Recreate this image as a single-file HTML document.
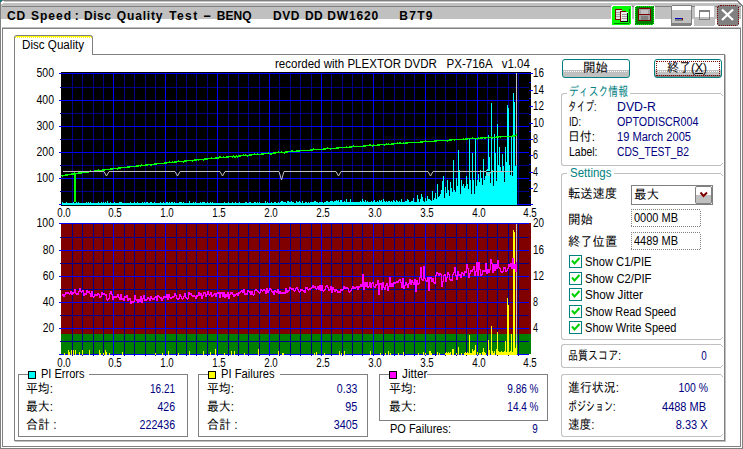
<!DOCTYPE html>
<html lang="ja"><head><meta charset="utf-8"><title>CD Speed : Disc Quality Test</title>
<style>
html,body{margin:0;padding:0;background:#fff;}
body{width:743px;height:449px;position:relative;overflow:hidden;font-family:"Liberation Sans","IPAGothic","Noto Sans CJK JP",sans-serif;font-size:12px;color:#000;}
div,span,svg{box-sizing:border-box;}
svg{position:absolute;left:0;top:0;}
</style></head><body>
<div style="position:absolute;left:0px;top:0px;width:743px;height:449px;background:#fff;"></div><div style="position:absolute;left:0px;top:0px;width:743px;height:1px;background:#808080;"></div><div style="position:absolute;left:0px;top:1px;width:743px;height:1px;background:#c0c0c0;"></div><div style="position:absolute;left:0px;top:2px;width:743px;height:1px;background:#fff;"></div><div style="position:absolute;left:0px;top:3px;width:743px;height:3px;background:#c0c0c0;"></div><div style="position:absolute;left:0px;top:6px;width:743px;height:1px;background:#808080;"></div><div style="position:absolute;left:0px;top:7px;width:743px;height:12px;background:#c0c0c0;"></div><div style="position:absolute;left:0px;top:19px;width:743px;height:8px;background:#fff;"></div><div style="position:absolute;left:0px;top:27px;width:743px;height:1px;background:#c0c0c0;"></div><div style="position:absolute;left:0px;top:0px;width:1px;height:449px;background:#808080;"></div><div style="position:absolute;left:1px;top:3px;width:1px;height:16px;background:#c0c0c0;"></div><div style="position:absolute;left:1px;top:19px;width:1px;height:429px;background:#fff;"></div><div style="position:absolute;left:742px;top:0px;width:1px;height:449px;background:#808080;"></div><div style="position:absolute;left:741px;top:6px;width:1px;height:443px;background:#fff;"></div><div style="position:absolute;left:0px;top:448px;width:743px;height:1px;background:#808080;"></div><div style="position:absolute;left:2px;top:28px;width:739px;height:1px;background:#808080;"></div><div style="position:absolute;left:2px;top:28px;width:1px;height:419px;background:#808080;"></div><div style="position:absolute;left:740px;top:28px;width:1px;height:419px;background:#808080;"></div><div style="position:absolute;left:2px;top:446px;width:739px;height:1px;background:#808080;"></div><svg width="743" height="449" shape-rendering="crispEdges"><path d="M0 0h2v1h-1v1h-1z" fill="#008080"/><path d="M2 0h1v1h-1zM1 1h1v1h-1zM0 2h1v1h-1z" fill="#808080"/><path d="M2 1h2v1h-2zM1 2h2v2h-2z" fill="#fff"/><path d="M738 0h5v5h-1v-1h-1v-1h-1v-1h-1v-1h-1z" fill="#fff"/><path d="M737 0h1v1h1v1h1v1h1v1h1v1h1v1h-2v-1h-1v-1h-1v-1h-1v-1h-1v-1h-1z" fill="#808080"/></svg><span style="position:absolute;top:8.842px;font-size:12px;line-height:14px;color:#000;white-space:pre;font-weight:bold;letter-spacing:0.856px;left:7px;transform-origin:0 0;">CD</span>
<span style="position:absolute;top:8.842px;font-size:12px;line-height:14px;color:#000;white-space:pre;font-weight:bold;letter-spacing:0.996px;left:31px;transform-origin:0 0;">Speed</span>
<span style="position:absolute;top:8.842px;font-size:12px;line-height:14px;color:#000;white-space:pre;font-weight:bold;letter-spacing:-0.7px;left:74.7px;transform-origin:0 0;">:</span>
<span style="position:absolute;top:8.842px;font-size:12px;line-height:14px;color:#000;white-space:pre;font-weight:bold;letter-spacing:0.547px;left:84px;transform-origin:0 0;">Disc</span>
<span style="position:absolute;top:8.842px;font-size:12px;line-height:14px;color:#000;white-space:pre;font-weight:bold;letter-spacing:0.835px;left:116.8px;transform-origin:0 0;">Quality</span>
<span style="position:absolute;top:8.842px;font-size:12px;line-height:14px;color:#000;white-space:pre;font-weight:bold;letter-spacing:1.401px;left:169.2px;transform-origin:0 0;">Test</span>
<span style="position:absolute;top:8.842px;font-size:12px;line-height:14px;color:#000;white-space:pre;font-weight:bold;left:202.7px;transform-origin:0 0;transform:scaleX(2.075);">-</span>
<span style="position:absolute;top:8.842px;font-size:12px;line-height:14px;color:#000;white-space:pre;font-weight:bold;letter-spacing:0.009px;left:216.8px;transform-origin:0 0;">BENQ</span>
<span style="position:absolute;top:8.842px;font-size:12px;line-height:14px;color:#000;white-space:pre;font-weight:bold;letter-spacing:0.478px;left:273px;transform-origin:0 0;">DVD</span>
<span style="position:absolute;top:8.842px;font-size:12px;line-height:14px;color:#000;white-space:pre;font-weight:bold;letter-spacing:0.456px;left:305px;transform-origin:0 0;">DD</span>
<span style="position:absolute;top:8.842px;font-size:12px;line-height:14px;color:#000;white-space:pre;font-weight:bold;letter-spacing:0.883px;left:327.2px;transform-origin:0 0;">DW1620</span>
<span style="position:absolute;top:8.842px;font-size:12px;line-height:14px;color:#000;white-space:pre;font-weight:bold;letter-spacing:1.319px;left:399.2px;transform-origin:0 0;">B7T9</span>
<div style="position:absolute;left:14px;top:54px;width:711px;height:1px;background:#808080;"></div><div style="position:absolute;left:14px;top:54px;width:1px;height:387px;background:#808080;"></div><div style="position:absolute;left:724px;top:54px;width:1px;height:387px;background:#808080;"></div><div style="position:absolute;left:14px;top:440px;width:711px;height:1px;background:#808080;"></div><div style="position:absolute;left:725px;top:55px;width:1px;height:387px;background:#c0c0c0;"></div><div style="position:absolute;left:15px;top:441px;width:711px;height:1px;background:#c0c0c0;"></div><div style="position:absolute;left:14px;top:35px;width:79px;height:20px;background:#fff;border:1px solid #808080;border-bottom:none;border-radius:3px 3px 0 0;"></div><div style="position:absolute;left:16px;top:36px;width:75px;height:1px;background:#ffff00;"></div><div style="position:absolute;left:15px;top:37px;width:77px;height:1px;background:repeating-linear-gradient(90deg,#ffff00 0,#ffff00 1px,#fff 1px,#fff 2px);"></div><span style="position:absolute;top:37.842px;font-size:12px;line-height:14px;color:#000;white-space:pre;left:22px;transform-origin:0 0;transform:scaleX(0.969);">Disc Quality</span>
<span style="position:absolute;top:56.842px;font-size:12px;line-height:14px;color:#000;white-space:pre;left:275px;transform-origin:0 0;transform:scaleX(0.961);">recorded with PLEXTOR DVDR   PX-716A   v1.04</span>
<svg width="743" height="449" viewBox="0 0 743 449" shape-rendering="crispEdges"><rect x="61" y="72" width="470" height="134" fill="#000"/><rect x="72" y="73" width="1" height="132" fill="#000088"/><rect x="82" y="73" width="1" height="132" fill="#000088"/><rect x="93" y="73" width="1" height="132" fill="#000088"/><rect x="103" y="73" width="1" height="132" fill="#000088"/><rect x="124" y="73" width="1" height="132" fill="#000088"/><rect x="134" y="73" width="1" height="132" fill="#000088"/><rect x="145" y="73" width="1" height="132" fill="#000088"/><rect x="155" y="73" width="1" height="132" fill="#000088"/><rect x="176" y="73" width="1" height="132" fill="#000088"/><rect x="186" y="73" width="1" height="132" fill="#000088"/><rect x="196" y="73" width="1" height="132" fill="#000088"/><rect x="207" y="73" width="1" height="132" fill="#000088"/><rect x="228" y="73" width="1" height="132" fill="#000088"/><rect x="238" y="73" width="1" height="132" fill="#000088"/><rect x="248" y="73" width="1" height="132" fill="#000088"/><rect x="259" y="73" width="1" height="132" fill="#000088"/><rect x="279" y="73" width="1" height="132" fill="#000088"/><rect x="290" y="73" width="1" height="132" fill="#000088"/><rect x="300" y="73" width="1" height="132" fill="#000088"/><rect x="311" y="73" width="1" height="132" fill="#000088"/><rect x="331" y="73" width="1" height="132" fill="#000088"/><rect x="342" y="73" width="1" height="132" fill="#000088"/><rect x="352" y="73" width="1" height="132" fill="#000088"/><rect x="362" y="73" width="1" height="132" fill="#000088"/><rect x="383" y="73" width="1" height="132" fill="#000088"/><rect x="394" y="73" width="1" height="132" fill="#000088"/><rect x="404" y="73" width="1" height="132" fill="#000088"/><rect x="414" y="73" width="1" height="132" fill="#000088"/><rect x="435" y="73" width="1" height="132" fill="#000088"/><rect x="445" y="73" width="1" height="132" fill="#000088"/><rect x="456" y="73" width="1" height="132" fill="#000088"/><rect x="466" y="73" width="1" height="132" fill="#000088"/><rect x="487" y="73" width="1" height="132" fill="#000088"/><rect x="497" y="73" width="1" height="132" fill="#000088"/><rect x="508" y="73" width="1" height="132" fill="#000088"/><rect x="518" y="73" width="1" height="132" fill="#000088"/><rect x="60" y="87" width="469" height="1" fill="#000088"/><rect x="60" y="113" width="469" height="1" fill="#000088"/><rect x="60" y="139" width="469" height="1" fill="#000088"/><rect x="60" y="165" width="469" height="1" fill="#000088"/><rect x="60" y="191" width="469" height="1" fill="#000088"/><rect x="113" y="73" width="1" height="132" fill="#0000ff"/><rect x="165" y="73" width="1" height="132" fill="#0000ff"/><rect x="217" y="73" width="1" height="132" fill="#0000ff"/><rect x="269" y="73" width="1" height="132" fill="#0000ff"/><rect x="321" y="73" width="1" height="132" fill="#0000ff"/><rect x="373" y="73" width="1" height="132" fill="#0000ff"/><rect x="425" y="73" width="1" height="132" fill="#0000ff"/><rect x="477" y="73" width="1" height="132" fill="#0000ff"/><rect x="59" y="73" width="470" height="1" fill="#0000ff"/><rect x="59" y="100" width="470" height="1" fill="#0000ff"/><rect x="59" y="126" width="470" height="1" fill="#0000ff"/><rect x="59" y="152" width="470" height="1" fill="#0000ff"/><rect x="59" y="178" width="470" height="1" fill="#0000ff"/><rect x="59" y="204" width="470" height="1" fill="#0000ff"/><rect x="529" y="204" width="4" height="1" fill="#0000ff"/><rect x="529" y="196" width="2" height="1" fill="#0000ff"/><rect x="529" y="188" width="4" height="1" fill="#0000ff"/><rect x="529" y="180" width="2" height="1" fill="#0000ff"/><rect x="529" y="172" width="4" height="1" fill="#0000ff"/><rect x="529" y="164" width="2" height="1" fill="#0000ff"/><rect x="529" y="155" width="4" height="1" fill="#0000ff"/><rect x="529" y="147" width="2" height="1" fill="#0000ff"/><rect x="529" y="139" width="4" height="1" fill="#0000ff"/><rect x="529" y="131" width="2" height="1" fill="#0000ff"/><rect x="529" y="123" width="4" height="1" fill="#0000ff"/><rect x="529" y="114" width="2" height="1" fill="#0000ff"/><rect x="529" y="106" width="4" height="1" fill="#0000ff"/><rect x="529" y="98" width="2" height="1" fill="#0000ff"/><rect x="529" y="90" width="4" height="1" fill="#0000ff"/><rect x="529" y="82" width="2" height="1" fill="#0000ff"/><rect x="529" y="73" width="4" height="1" fill="#0000ff"/><rect x="61" y="223" width="470" height="111" fill="#800000"/><rect x="61" y="334" width="470" height="20" fill="#008000"/><rect x="72" y="223" width="1" height="133" fill="#000088"/><rect x="82" y="223" width="1" height="133" fill="#000088"/><rect x="93" y="223" width="1" height="133" fill="#000088"/><rect x="103" y="223" width="1" height="133" fill="#000088"/><rect x="124" y="223" width="1" height="133" fill="#000088"/><rect x="134" y="223" width="1" height="133" fill="#000088"/><rect x="145" y="223" width="1" height="133" fill="#000088"/><rect x="155" y="223" width="1" height="133" fill="#000088"/><rect x="176" y="223" width="1" height="133" fill="#000088"/><rect x="186" y="223" width="1" height="133" fill="#000088"/><rect x="196" y="223" width="1" height="133" fill="#000088"/><rect x="207" y="223" width="1" height="133" fill="#000088"/><rect x="228" y="223" width="1" height="133" fill="#000088"/><rect x="238" y="223" width="1" height="133" fill="#000088"/><rect x="248" y="223" width="1" height="133" fill="#000088"/><rect x="259" y="223" width="1" height="133" fill="#000088"/><rect x="279" y="223" width="1" height="133" fill="#000088"/><rect x="290" y="223" width="1" height="133" fill="#000088"/><rect x="300" y="223" width="1" height="133" fill="#000088"/><rect x="311" y="223" width="1" height="133" fill="#000088"/><rect x="331" y="223" width="1" height="133" fill="#000088"/><rect x="342" y="223" width="1" height="133" fill="#000088"/><rect x="352" y="223" width="1" height="133" fill="#000088"/><rect x="362" y="223" width="1" height="133" fill="#000088"/><rect x="383" y="223" width="1" height="133" fill="#000088"/><rect x="394" y="223" width="1" height="133" fill="#000088"/><rect x="404" y="223" width="1" height="133" fill="#000088"/><rect x="414" y="223" width="1" height="133" fill="#000088"/><rect x="435" y="223" width="1" height="133" fill="#000088"/><rect x="445" y="223" width="1" height="133" fill="#000088"/><rect x="456" y="223" width="1" height="133" fill="#000088"/><rect x="466" y="223" width="1" height="133" fill="#000088"/><rect x="487" y="223" width="1" height="133" fill="#000088"/><rect x="497" y="223" width="1" height="133" fill="#000088"/><rect x="508" y="223" width="1" height="133" fill="#000088"/><rect x="518" y="223" width="1" height="133" fill="#000088"/><rect x="60" y="237" width="469" height="1" fill="#000088"/><rect x="60" y="263" width="469" height="1" fill="#000088"/><rect x="60" y="289" width="469" height="1" fill="#000088"/><rect x="60" y="315" width="469" height="1" fill="#000088"/><rect x="60" y="341" width="469" height="1" fill="#000088"/><rect x="113" y="223" width="1" height="133" fill="#0000ff"/><rect x="165" y="223" width="1" height="133" fill="#0000ff"/><rect x="217" y="223" width="1" height="133" fill="#0000ff"/><rect x="269" y="223" width="1" height="133" fill="#0000ff"/><rect x="321" y="223" width="1" height="133" fill="#0000ff"/><rect x="373" y="223" width="1" height="133" fill="#0000ff"/><rect x="425" y="223" width="1" height="133" fill="#0000ff"/><rect x="477" y="223" width="1" height="133" fill="#0000ff"/><rect x="59" y="223" width="470" height="1" fill="#0000ff"/><rect x="59" y="250" width="470" height="1" fill="#0000ff"/><rect x="59" y="276" width="470" height="1" fill="#0000ff"/><rect x="59" y="302" width="470" height="1" fill="#0000ff"/><rect x="59" y="328" width="470" height="1" fill="#0000ff"/><rect x="59" y="354" width="470" height="1" fill="#0000ff"/><path d="M62.5 205V202M63.5 205V203M64.5 205V203M65.5 205V203M66.5 205V202M67.5 205V203M68.5 205V203M69.5 205V203M70.5 205V203M71.5 205V203M72.5 205V203M73.5 205V202M74.5 205V203M75.5 205V203M76.5 205V202M77.5 205V203M78.5 205V202M79.5 205V203M80.5 205V203M81.5 205V203M82.5 205V203M83.5 205V203M84.5 205V203M85.5 205V203M86.5 205V202M87.5 205V203M88.5 205V202M89.5 205V203M90.5 205V202M91.5 205V203M92.5 205V203M93.5 205V203M94.5 205V203M95.5 205V203M96.5 205V203M97.5 205V203M98.5 205V202M99.5 205V203M100.5 205V203M101.5 205V202M102.5 205V203M103.5 205V202M104.5 205V203M105.5 205V202M106.5 205V203M107.5 205V201M108.5 205V203M109.5 205V203M110.5 205V202M111.5 205V203M112.5 205V203M113.5 205V203M114.5 205V202M115.5 205V203M116.5 205V203M117.5 205V203M118.5 205V203M119.5 205V202M120.5 205V202M121.5 205V202M122.5 205V203M123.5 205V203M124.5 205V203M125.5 205V203M126.5 205V203M127.5 205V203M128.5 205V203M129.5 205V203M130.5 205V202M131.5 205V203M132.5 205V203M133.5 205V203M134.5 205V202M135.5 205V203M136.5 205V203M137.5 205V202M138.5 205V203M139.5 205V203M140.5 205V203M141.5 205V203M142.5 205V202M143.5 205V203M144.5 205V202M145.5 205V203M146.5 205V202M147.5 205V202M148.5 205V203M149.5 205V203M150.5 205V202M151.5 205V202M152.5 205V203M153.5 205V203M154.5 205V202M155.5 205V203M156.5 205V203M157.5 205V203M158.5 205V203M159.5 205V203M160.5 205V202M161.5 205V203M162.5 205V203M163.5 205V202M164.5 205V203M165.5 205V203M166.5 205V202M167.5 205V202M168.5 205V203M169.5 205V202M170.5 205V203M171.5 205V202M172.5 205V202M173.5 205V203M174.5 205V202M175.5 205V203M176.5 205V203M177.5 205V203M178.5 205V203M179.5 205V202M180.5 205V202M181.5 205V202M182.5 205V203M183.5 205V202M184.5 205V203M185.5 205V203M186.5 205V203M187.5 205V203M188.5 205V203M189.5 205V201M190.5 205V203M191.5 205V203M192.5 205V203M193.5 205V202M194.5 205V203M195.5 205V202M196.5 205V203M197.5 205V203M198.5 205V203M199.5 205V203M200.5 205V202M201.5 205V203M202.5 205V202M203.5 205V202M204.5 205V202M205.5 205V203M206.5 205V203M207.5 205V202M208.5 205V203M209.5 205V203M210.5 205V202M211.5 205V203M212.5 205V202M213.5 205V203M214.5 205V203M215.5 205V203M216.5 205V203M217.5 205V203M218.5 205V203M219.5 205V203M220.5 205V203M221.5 205V203M222.5 205V203M223.5 205V203M224.5 205V202M225.5 205V203M226.5 205V203M227.5 205V203M228.5 205V202M229.5 205V203M230.5 205V203M231.5 205V203M232.5 205V202M233.5 205V203M234.5 205V203M235.5 205V202M236.5 205V203M237.5 205V203M238.5 205V203M239.5 205V202M240.5 205V203M241.5 205V203M242.5 205V203M243.5 205V203M244.5 205V203M245.5 205V202M246.5 205V202M247.5 205V203M248.5 205V203M249.5 205V202M250.5 205V202M251.5 205V203M252.5 205V203M253.5 205V203M254.5 205V202M255.5 205V202M256.5 205V203M257.5 205V202M258.5 205V203M259.5 205V202M260.5 205V203M261.5 205V203M262.5 205V203M263.5 205V203M264.5 205V203M265.5 205V201M266.5 205V203M267.5 205V202M268.5 205V203M269.5 205V203M270.5 205V203M271.5 205V202M272.5 205V203M273.5 205V203M274.5 205V202M275.5 205V202M276.5 205V203M277.5 205V203M278.5 205V202M279.5 205V203M280.5 205V202M281.5 205V201M282.5 205V201M283.5 205V202M284.5 205V202M285.5 205V202M286.5 205V203M287.5 205V201M288.5 205V201M289.5 205V202M290.5 205V202M291.5 205V201M292.5 205V202M293.5 205V202M294.5 205V203M295.5 205V203M296.5 205V201M297.5 205V202M298.5 205V202M299.5 205V201M300.5 205V202M301.5 205V203M302.5 205V201M303.5 205V203M304.5 205V203M305.5 205V202M306.5 205V202M307.5 205V203M308.5 205V202M309.5 205V203M310.5 205V202M311.5 205V202M312.5 205V202M313.5 205V202M314.5 205V201M315.5 205V201M316.5 205V202M317.5 205V202M318.5 205V203M319.5 205V202M320.5 205V202M321.5 205V202M322.5 205V202M323.5 205V203M324.5 205V202M325.5 205V202M326.5 205V201M327.5 205V201M328.5 205V202M329.5 205V202M330.5 205V201M331.5 205V201M332.5 205V201M333.5 205V202M334.5 205V201M335.5 205V201M336.5 205V200M337.5 205V201M338.5 205V200M339.5 205V202M340.5 205V200M341.5 205V200M342.5 205V202M343.5 205V202M344.5 205V201M345.5 205V202M346.5 205V199M347.5 205V202M348.5 205V202M349.5 205V202M350.5 205V199M351.5 205V202M352.5 205V202M353.5 205V202M354.5 205V202M355.5 205V202M356.5 205V202M357.5 205V202M358.5 205V202M359.5 205V202M360.5 205V201M361.5 205V202M362.5 205V199M363.5 205V201M364.5 205V202M365.5 205V200M366.5 205V202M367.5 205V201M368.5 205V202M369.5 205V202M370.5 205V202M371.5 205V201M372.5 205V202M373.5 205V201M374.5 205V200M375.5 205V202M376.5 205V202M377.5 205V201M378.5 205V202M379.5 205V200M380.5 205V201M381.5 205V200M382.5 205V202M383.5 205V199M384.5 205V201M385.5 205V202M386.5 205V201M387.5 205V202M388.5 205V201M389.5 205V201M390.5 205V202M391.5 205V201M392.5 205V202M393.5 205V200M394.5 205V201M395.5 205V202M396.5 205V200M397.5 205V201M398.5 205V202M399.5 205V201M400.5 205V202M401.5 205V199M402.5 205V202M403.5 205V202M404.5 205V202M405.5 205V201M406.5 205V201M407.5 205V199M408.5 205V200M409.5 205V202M410.5 205V202M411.5 205V201M412.5 205V201M413.5 205V198M414.5 205V202M415.5 205V202M416.5 205V202M417.5 205V195M418.5 205V199M419.5 205V202M420.5 205V199M421.5 205V194M422.5 205V197M423.5 205V201M424.5 205V202M425.5 205V198M426.5 205V201M427.5 205V196M428.5 205V199M429.5 205V199M430.5 205V200M431.5 205V201M432.5 205V191M433.5 205V200M434.5 205V198M435.5 205V193M436.5 205V199M437.5 205V184M438.5 205V197M439.5 205V196M440.5 205V194M441.5 205V190M442.5 205V181M443.5 205V176M444.5 205V198M445.5 205V187M446.5 205V193M447.5 205V180M448.5 205V190M449.5 205V196M450.5 205V182M451.5 205V188M452.5 205V192M453.5 205V160M454.5 205V190M455.5 205V192M456.5 205V178M457.5 205V186M458.5 205V150M459.5 205V170M460.5 205V194M461.5 205V180M462.5 205V186M463.5 205V184M464.5 205V188M465.5 205V186M466.5 205V176M467.5 205V184M468.5 205V189M469.5 205V138M470.5 205V180M471.5 205V194M472.5 205V153M473.5 205V180M474.5 205V194M475.5 205V138M476.5 205V186M477.5 205V180M478.5 205V174M479.5 205V182M480.5 205V170M481.5 205V178M482.5 205V185M483.5 205V159M484.5 205V180M485.5 205V176M486.5 205V170M487.5 205V169M488.5 205V135M489.5 205V157M490.5 205V183M491.5 205V103M492.5 205V170M493.5 205V186M494.5 205V134M495.5 205V153M496.5 205V181M497.5 205V124M498.5 205V165M499.5 205V147M500.5 205V167M501.5 205V172M502.5 205V154M503.5 205V166M504.5 205V182M505.5 205V147M506.5 205V162M507.5 205V105M508.5 205V108M509.5 205V165M510.5 205V175M511.5 205V136M512.5 205V176M513.5 205V93M514.5 205V102M515.5 205V166M516.5 205V150" stroke="#00ffff" stroke-width="1" fill="none"/><rect x="516" y="73" width="1" height="92" fill="#c0c0c0"/><rect x="74" y="173" width="2" height="29" fill="#00ff00"/><path d="M61 175h1v1h-1zM62 175h1v2h-1zM63 175h1v1h-1zM64 175h1v1h-1zM65 174h1v2h-1zM66 174h1v2h-1zM67 174h1v2h-1zM68 174h1v1h-1zM69 174h1v1h-1zM70 174h1v1h-1zM71 173h1v2h-1zM72 173h1v2h-1zM73 173h1v2h-1zM74 172h1v2h-1zM75 173h1v1h-1zM76 173h1v1h-1zM77 173h1v1h-1zM78 172h1v2h-1zM79 172h1v2h-1zM80 172h1v2h-1zM81 172h1v2h-1zM82 172h1v1h-1zM83 172h1v1h-1zM84 171h1v2h-1zM85 172h1v1h-1zM86 171h1v2h-1zM87 171h1v2h-1zM88 171h1v2h-1zM89 171h1v1h-1zM90 170h1v2h-1zM91 171h1v1h-1zM92 171h1v1h-1zM93 171h1v1h-1zM94 170h1v2h-1zM95 170h1v2h-1zM96 170h1v2h-1zM97 170h1v1h-1zM98 169h1v2h-1zM99 170h1v1h-1zM100 170h1v1h-1zM101 170h1v1h-1zM102 169h1v2h-1zM103 169h1v2h-1zM104 169h1v2h-1zM105 169h1v1h-1zM106 169h1v1h-1zM107 169h1v1h-1zM108 169h1v1h-1zM109 169h1v1h-1zM110 168h1v2h-1zM111 168h1v2h-1zM112 168h1v2h-1zM113 168h1v1h-1zM114 168h1v1h-1zM115 168h1v1h-1zM116 168h1v1h-1zM117 168h1v2h-1zM118 167h1v2h-1zM119 167h1v2h-1zM120 167h1v2h-1zM121 167h1v1h-1zM122 167h1v1h-1zM123 167h1v1h-1zM124 167h1v1h-1zM125 167h1v1h-1zM126 167h1v1h-1zM127 166h1v2h-1zM128 166h1v2h-1zM129 166h1v2h-1zM130 166h1v1h-1zM131 166h1v1h-1zM132 166h1v1h-1zM133 166h1v1h-1zM134 166h1v1h-1zM135 166h1v1h-1zM136 165h1v2h-1zM137 165h1v2h-1zM138 165h1v2h-1zM139 165h1v1h-1zM140 165h1v2h-1zM141 164h1v2h-1zM142 165h1v1h-1zM143 165h1v1h-1zM144 165h1v1h-1zM145 164h1v2h-1zM146 164h1v2h-1zM147 164h1v2h-1zM148 164h1v1h-1zM149 164h1v1h-1zM150 164h1v2h-1zM151 164h1v2h-1zM152 164h1v1h-1zM153 164h1v1h-1zM154 163h1v2h-1zM155 163h1v2h-1zM156 163h1v2h-1zM157 163h1v1h-1zM158 163h1v1h-1zM159 163h1v1h-1zM160 163h1v1h-1zM161 163h1v1h-1zM162 163h1v1h-1zM163 163h1v1h-1zM164 162h1v2h-1zM165 162h1v2h-1zM166 162h1v2h-1zM167 162h1v1h-1zM168 162h1v1h-1zM169 161h1v2h-1zM170 162h1v1h-1zM171 162h1v1h-1zM172 161h1v2h-1zM173 162h1v1h-1zM174 161h1v2h-1zM175 161h1v2h-1zM176 161h1v2h-1zM177 161h1v1h-1zM178 160h1v2h-1zM179 161h1v1h-1zM180 161h1v1h-1zM181 161h1v1h-1zM182 161h1v1h-1zM183 161h1v2h-1zM184 160h1v2h-1zM185 160h1v2h-1zM186 160h1v2h-1zM187 160h1v1h-1zM188 160h1v1h-1zM189 160h1v1h-1zM190 160h1v1h-1zM191 160h1v1h-1zM192 160h1v2h-1zM193 160h1v1h-1zM194 159h1v2h-1zM195 159h1v2h-1zM196 159h1v2h-1zM197 159h1v1h-1zM198 159h1v2h-1zM199 159h1v1h-1zM200 159h1v1h-1zM201 159h1v1h-1zM202 159h1v1h-1zM203 159h1v2h-1zM204 158h1v2h-1zM205 158h1v2h-1zM206 158h1v2h-1zM207 158h1v2h-1zM208 158h1v1h-1zM209 158h1v1h-1zM210 158h1v1h-1zM211 157h1v2h-1zM212 158h1v1h-1zM213 158h1v1h-1zM214 158h1v1h-1zM215 157h1v2h-1zM216 157h1v2h-1zM217 157h1v2h-1zM218 157h1v2h-1zM219 156h1v2h-1zM220 156h1v2h-1zM221 157h1v1h-1zM222 157h1v1h-1zM223 156h1v2h-1zM224 157h1v1h-1zM225 157h1v1h-1zM226 156h1v2h-1zM227 156h1v2h-1zM228 156h1v2h-1zM229 156h1v1h-1zM230 156h1v1h-1zM231 156h1v1h-1zM232 156h1v2h-1zM233 155h1v2h-1zM234 156h1v2h-1zM235 156h1v2h-1zM236 155h1v2h-1zM237 156h1v2h-1zM238 155h1v2h-1zM239 155h1v2h-1zM240 155h1v2h-1zM241 155h1v1h-1zM242 155h1v1h-1zM243 154h1v2h-1zM244 155h1v1h-1zM245 154h1v2h-1zM246 155h1v1h-1zM247 155h1v2h-1zM248 155h1v1h-1zM249 154h1v2h-1zM250 154h1v2h-1zM251 154h1v2h-1zM252 154h1v1h-1zM253 154h1v1h-1zM254 153h1v2h-1zM255 154h1v1h-1zM256 154h1v1h-1zM257 153h1v2h-1zM258 154h1v1h-1zM259 154h1v1h-1zM260 154h1v1h-1zM261 153h1v2h-1zM262 153h1v2h-1zM263 153h1v2h-1zM264 153h1v1h-1zM265 153h1v1h-1zM266 153h1v1h-1zM267 153h1v1h-1zM268 152h1v2h-1zM269 153h1v1h-1zM270 153h1v2h-1zM271 153h1v2h-1zM272 153h1v1h-1zM273 152h1v2h-1zM274 152h1v2h-1zM275 152h1v2h-1zM276 152h1v1h-1zM277 152h1v1h-1zM278 151h1v2h-1zM279 152h1v1h-1zM280 152h1v1h-1zM281 151h1v2h-1zM282 152h1v1h-1zM283 152h1v1h-1zM284 152h1v2h-1zM285 151h1v2h-1zM286 151h1v2h-1zM287 151h1v2h-1zM288 151h1v1h-1zM289 151h1v1h-1zM290 151h1v1h-1zM291 150h1v2h-1zM292 150h1v2h-1zM293 151h1v1h-1zM294 151h1v1h-1zM295 151h1v1h-1zM296 150h1v2h-1zM297 150h1v2h-1zM298 150h1v2h-1zM299 150h1v2h-1zM300 150h1v1h-1zM301 150h1v1h-1zM302 150h1v1h-1zM303 150h1v1h-1zM304 150h1v1h-1zM305 150h1v1h-1zM306 150h1v1h-1zM307 150h1v1h-1zM308 150h1v1h-1zM309 150h1v1h-1zM310 149h1v2h-1zM311 149h1v2h-1zM312 149h1v2h-1zM313 148h1v2h-1zM314 149h1v1h-1zM315 149h1v1h-1zM316 149h1v1h-1zM317 149h1v1h-1zM318 149h1v1h-1zM319 149h1v1h-1zM320 149h1v1h-1zM321 149h1v1h-1zM322 149h1v1h-1zM323 148h1v2h-1zM324 148h1v2h-1zM325 148h1v2h-1zM326 148h1v1h-1zM327 147h1v2h-1zM328 148h1v1h-1zM329 148h1v1h-1zM330 148h1v2h-1zM331 148h1v1h-1zM332 148h1v1h-1zM333 148h1v1h-1zM334 148h1v1h-1zM335 148h1v1h-1zM336 147h1v2h-1zM337 147h1v2h-1zM338 147h1v2h-1zM339 147h1v1h-1zM340 147h1v1h-1zM341 147h1v1h-1zM342 147h1v1h-1zM343 147h1v1h-1zM344 147h1v1h-1zM345 147h1v1h-1zM346 146h1v2h-1zM347 147h1v1h-1zM348 147h1v1h-1zM349 146h1v2h-1zM350 146h1v2h-1zM351 146h1v2h-1zM352 146h1v1h-1zM353 145h1v2h-1zM354 146h1v1h-1zM355 146h1v1h-1zM356 146h1v1h-1zM357 146h1v1h-1zM358 146h1v1h-1zM359 146h1v1h-1zM360 146h1v1h-1zM361 146h1v1h-1zM362 146h1v1h-1zM363 145h1v2h-1zM364 145h1v2h-1zM365 145h1v2h-1zM366 145h1v1h-1zM367 145h1v1h-1zM368 145h1v1h-1zM369 144h1v2h-1zM370 144h1v2h-1zM371 145h1v1h-1zM372 145h1v2h-1zM373 144h1v2h-1zM374 145h1v1h-1zM375 145h1v1h-1zM376 145h1v1h-1zM377 144h1v2h-1zM378 144h1v2h-1zM379 144h1v2h-1zM380 144h1v1h-1zM381 144h1v1h-1zM382 144h1v1h-1zM383 144h1v1h-1zM384 144h1v2h-1zM385 144h1v1h-1zM386 143h1v2h-1zM387 144h1v1h-1zM388 143h1v2h-1zM389 144h1v1h-1zM390 144h1v1h-1zM391 143h1v2h-1zM392 143h1v2h-1zM393 143h1v2h-1zM394 143h1v1h-1zM395 143h1v1h-1zM396 143h1v1h-1zM397 142h1v2h-1zM398 143h1v1h-1zM399 142h1v2h-1zM400 142h1v2h-1zM401 143h1v1h-1zM402 143h1v1h-1zM403 142h1v2h-1zM404 143h1v1h-1zM405 142h1v2h-1zM406 142h1v2h-1zM407 142h1v2h-1zM408 142h1v1h-1zM409 142h1v1h-1zM410 142h1v1h-1zM411 142h1v1h-1zM412 142h1v1h-1zM413 142h1v1h-1zM414 142h1v1h-1zM415 142h1v1h-1zM416 142h1v1h-1zM417 142h1v1h-1zM418 142h1v1h-1zM419 142h1v1h-1zM420 141h1v2h-1zM421 141h1v2h-1zM422 141h1v2h-1zM423 141h1v1h-1zM424 141h1v1h-1zM425 140h1v2h-1zM426 141h1v1h-1zM427 141h1v1h-1zM428 141h1v1h-1zM429 141h1v1h-1zM430 141h1v1h-1zM431 141h1v1h-1zM432 141h1v1h-1zM433 141h1v1h-1zM434 140h1v2h-1zM435 140h1v2h-1zM436 140h1v2h-1zM437 140h1v1h-1zM438 140h1v1h-1zM439 140h1v1h-1zM440 140h1v1h-1zM441 140h1v1h-1zM442 140h1v1h-1zM443 140h1v1h-1zM444 140h1v1h-1zM445 140h1v1h-1zM446 140h1v1h-1zM447 140h1v2h-1zM448 140h1v1h-1zM449 139h1v2h-1zM450 139h1v2h-1zM451 139h1v2h-1zM452 139h1v1h-1zM453 139h1v1h-1zM454 139h1v2h-1zM455 139h1v1h-1zM456 139h1v1h-1zM457 139h1v1h-1zM458 139h1v1h-1zM459 139h1v1h-1zM460 139h1v1h-1zM461 139h1v1h-1zM462 139h1v1h-1zM463 138h1v2h-1zM464 139h1v1h-1zM465 138h1v2h-1zM466 138h1v2h-1zM467 138h1v2h-1zM468 138h1v1h-1zM469 138h1v1h-1zM470 138h1v1h-1zM471 138h1v1h-1zM472 137h1v2h-1zM473 138h1v1h-1zM474 138h1v1h-1zM475 138h1v1h-1zM476 138h1v1h-1zM477 138h1v2h-1zM478 137h1v2h-1zM479 138h1v1h-1zM480 137h1v2h-1zM481 137h1v2h-1zM482 137h1v2h-1zM483 137h1v1h-1zM484 137h1v2h-1zM485 137h1v2h-1zM486 137h1v1h-1zM487 137h1v1h-1zM488 137h1v2h-1zM489 137h1v1h-1zM490 137h1v1h-1zM491 136h1v2h-1zM492 137h1v2h-1zM493 137h1v1h-1zM494 137h1v1h-1zM495 137h1v1h-1zM496 136h1v2h-1zM497 136h1v2h-1zM498 136h1v2h-1zM499 136h1v1h-1zM500 136h1v2h-1zM501 136h1v1h-1zM502 136h1v1h-1zM503 136h1v1h-1zM504 136h1v1h-1zM505 136h1v1h-1zM506 136h1v1h-1zM507 136h1v1h-1zM508 136h1v1h-1zM509 136h1v1h-1zM510 136h1v1h-1zM511 136h1v1h-1zM512 135h1v2h-1zM513 135h1v2h-1zM514 135h1v2h-1zM515 135h1v1h-1zM516 134h1v2h-1z" fill="#00ff00"/><rect x="63" y="171" width="450" height="1" fill="#c0c0c0"/><rect x="104" y="171" width="5" height="1" fill="#000"/><path d="M104 171.5L106.5 176L109 171.5" stroke="#c0c0c0" stroke-width="1" fill="none" shape-rendering="auto"/><rect x="175" y="171" width="5" height="1" fill="#000"/><path d="M175 171.5L177.5 176L180 171.5" stroke="#c0c0c0" stroke-width="1" fill="none" shape-rendering="auto"/><rect x="220" y="171" width="5" height="1" fill="#000"/><path d="M220 171.5L222.5 176L225 171.5" stroke="#c0c0c0" stroke-width="1" fill="none" shape-rendering="auto"/><rect x="279" y="171" width="5" height="1" fill="#000"/><path d="M279 171.5L281.5 180L284 171.5" stroke="#c0c0c0" stroke-width="1" fill="none" shape-rendering="auto"/><rect x="336" y="171" width="5" height="1" fill="#000"/><path d="M336 171.5L338.5 176L341 171.5" stroke="#c0c0c0" stroke-width="1" fill="none" shape-rendering="auto"/><rect x="428" y="171" width="5" height="1" fill="#000"/><path d="M428 171.5L430.5 176L433 171.5" stroke="#c0c0c0" stroke-width="1" fill="none" shape-rendering="auto"/><rect x="486" y="171" width="5" height="1" fill="#000"/><path d="M486 171.5L488.5 176L491 171.5" stroke="#c0c0c0" stroke-width="1" fill="none" shape-rendering="auto"/><rect x="516" y="224" width="1" height="130" fill="#c0c0c0"/><path d="M64.5 355V353M68.5 355V350M69.5 355V352M71.5 355V350M73.5 355V350M75.5 355V350M79.5 355V352M82.5 355V350M89.5 355V350M99.5 355V350M100.5 355V353M103.5 355V353M105.5 355V350M106.5 355V352M109.5 355V353M122.5 355V352M155.5 355V353M162.5 355V353M168.5 355V351M178.5 355V353M189.5 355V351M203.5 355V351M210.5 355V352M215.5 355V349M224.5 355V353M231.5 355V351M234.5 355V351M244.5 355V353M258.5 355V349M278.5 355V351M282.5 355V353M283.5 355V353M314.5 355V353M316.5 355V352M324.5 355V353M339.5 355V351M341.5 355V353M344.5 355V351M370.5 355V351M380.5 355V353M385.5 355V353M388.5 355V351M390.5 355V353M398.5 355V353M403.5 355V352M418.5 355V353M423.5 355V352M425.5 355V353M429.5 355V351M430.5 355V351M431.5 355V353M437.5 355V352M439.5 355V353M445.5 355V353M446.5 355V352M447.5 355V353M448.5 355V352M449.5 355V353M450.5 355V352M452.5 355V349M453.5 355V349M456.5 355V353M458.5 355V347M461.5 355V353M464.5 355V353M465.5 355V352M466.5 355V353M467.5 355V352M468.5 355V353M469.5 355V335M470.5 355V353M471.5 355V353M472.5 355V349M473.5 355V351M474.5 355V350M475.5 355V345M477.5 355V352M479.5 355V353M480.5 355V353M482.5 355V352M483.5 355V348M484.5 355V352M485.5 355V353M488.5 355V340M489.5 355V350M491.5 355V326M492.5 355V351M493.5 355V353M494.5 355V351M496.5 355V349M497.5 355V332M498.5 355V351M499.5 355V352M500.5 355V352M501.5 355V351M502.5 355V352M503.5 355V352M504.5 355V351M505.5 355V341M506.5 355V352M507.5 355V298M508.5 355V305M509.5 355V352M510.5 355V351M511.5 355V334M512.5 355V352M513.5 355V230M514.5 355V232M515.5 355V348M516.5 355V345" stroke="#ffff00" stroke-width="1" fill="none"/><path d="M62 294h1v2h-1zM63 294h1v3h-1zM64 294h1v3h-1zM65 292h1v3h-1zM66 292h1v2h-1zM67 292h1v2h-1zM68 292h1v2h-1zM69 293h1v2h-1zM70 291h1v3h-1zM71 291h1v4h-1zM72 292h1v3h-1zM73 292h1v2h-1zM74 289h1v4h-1zM75 289h1v5h-1zM76 293h1v2h-1zM77 293h1v2h-1zM78 291h1v4h-1zM79 288h1v4h-1zM80 288h1v4h-1zM81 291h1v2h-1zM82 290h1v2h-1zM83 290h1v6h-1zM84 293h1v3h-1zM85 293h1v2h-1zM86 290h1v5h-1zM87 290h1v3h-1zM88 291h1v2h-1zM89 291h1v3h-1zM90 293h1v4h-1zM91 291h1v6h-1zM92 291h1v6h-1zM93 296h1v2h-1zM94 294h1v3h-1zM95 294h1v2h-1zM96 294h1v2h-1zM97 293h1v3h-1zM98 293h1v2h-1zM99 294h1v4h-1zM100 296h1v2h-1zM101 292h1v5h-1zM102 292h1v3h-1zM103 293h1v2h-1zM104 293h1v2h-1zM105 294h1v2h-1zM106 294h1v6h-1zM107 299h1v2h-1zM108 298h1v2h-1zM109 293h1v6h-1zM110 291h1v3h-1zM111 291h1v4h-1zM112 294h1v6h-1zM113 296h1v4h-1zM114 296h1v2h-1zM115 296h1v2h-1zM116 296h1v2h-1zM117 294h1v3h-1zM118 294h1v4h-1zM119 297h1v3h-1zM120 294h1v6h-1zM121 294h1v6h-1zM122 298h1v2h-1zM123 298h1v3h-1zM124 296h1v5h-1zM125 296h1v2h-1zM126 295h1v3h-1zM127 295h1v6h-1zM128 298h1v3h-1zM129 298h1v2h-1zM130 298h1v6h-1zM131 301h1v3h-1zM132 301h1v2h-1zM133 301h1v2h-1zM134 295h1v7h-1zM135 295h1v5h-1zM136 299h1v2h-1zM137 299h1v4h-1zM138 299h1v4h-1zM139 299h1v3h-1zM140 296h1v6h-1zM141 296h1v7h-1zM142 298h1v5h-1zM143 295h1v4h-1zM144 295h1v6h-1zM145 299h1v2h-1zM146 299h1v2h-1zM147 297h1v3h-1zM148 297h1v2h-1zM149 298h1v3h-1zM150 296h1v5h-1zM151 296h1v3h-1zM152 298h1v2h-1zM153 298h1v2h-1zM154 297h1v3h-1zM155 296h1v2h-1zM156 296h1v5h-1zM157 295h1v6h-1zM158 295h1v2h-1zM159 296h1v2h-1zM160 297h1v2h-1zM161 297h1v4h-1zM162 298h1v3h-1zM163 296h1v3h-1zM164 296h1v2h-1zM165 296h1v2h-1zM166 294h1v4h-1zM167 294h1v6h-1zM168 294h1v6h-1zM169 294h1v4h-1zM170 297h1v2h-1zM171 297h1v2h-1zM172 296h1v2h-1zM173 296h1v2h-1zM174 293h1v4h-1zM175 293h1v3h-1zM176 295h1v4h-1zM177 298h1v2h-1zM178 298h1v2h-1zM179 294h1v5h-1zM180 294h1v3h-1zM181 296h1v3h-1zM182 298h1v2h-1zM183 296h1v3h-1zM184 293h1v4h-1zM185 293h1v5h-1zM186 297h1v2h-1zM187 298h1v2h-1zM188 292h1v7h-1zM189 292h1v3h-1zM190 293h1v2h-1zM191 293h1v3h-1zM192 295h1v2h-1zM193 295h1v2h-1zM194 295h1v2h-1zM195 296h1v3h-1zM196 295h1v4h-1zM197 295h1v2h-1zM198 292h1v4h-1zM199 292h1v4h-1zM200 293h1v3h-1zM201 293h1v6h-1zM202 295h1v4h-1zM203 292h1v4h-1zM204 292h1v2h-1zM205 292h1v5h-1zM206 294h1v3h-1zM207 291h1v4h-1zM208 291h1v4h-1zM209 294h1v2h-1zM210 292h1v3h-1zM211 292h1v5h-1zM212 295h1v2h-1zM213 294h1v2h-1zM214 293h1v2h-1zM215 293h1v4h-1zM216 293h1v4h-1zM217 292h1v2h-1zM218 292h1v2h-1zM219 292h1v6h-1zM220 292h1v6h-1zM221 292h1v2h-1zM222 292h1v5h-1zM223 292h1v5h-1zM224 292h1v6h-1zM225 294h1v4h-1zM226 294h1v3h-1zM227 292h1v5h-1zM228 292h1v7h-1zM229 294h1v5h-1zM230 292h1v3h-1zM231 292h1v2h-1zM232 292h1v3h-1zM233 294h1v3h-1zM234 294h1v3h-1zM235 294h1v2h-1zM236 293h1v2h-1zM237 293h1v3h-1zM238 292h1v4h-1zM239 292h1v2h-1zM240 291h1v2h-1zM241 290h1v2h-1zM242 290h1v3h-1zM243 289h1v4h-1zM244 289h1v6h-1zM245 293h1v2h-1zM246 293h1v2h-1zM247 290h1v5h-1zM248 290h1v2h-1zM249 291h1v2h-1zM250 291h1v4h-1zM251 291h1v4h-1zM252 291h1v4h-1zM253 294h1v2h-1zM254 290h1v5h-1zM255 289h1v2h-1zM256 289h1v2h-1zM257 290h1v2h-1zM258 291h1v2h-1zM259 292h1v2h-1zM260 289h1v4h-1zM261 289h1v2h-1zM262 290h1v2h-1zM263 289h1v2h-1zM264 289h1v2h-1zM265 290h1v4h-1zM266 288h1v6h-1zM267 288h1v5h-1zM268 290h1v3h-1zM269 288h1v3h-1zM270 288h1v2h-1zM271 289h1v3h-1zM272 291h1v2h-1zM273 291h1v4h-1zM274 290h1v5h-1zM275 290h1v2h-1zM276 291h1v2h-1zM277 289h1v4h-1zM278 289h1v5h-1zM279 291h1v3h-1zM280 291h1v3h-1zM281 292h1v2h-1zM282 292h1v2h-1zM283 292h1v2h-1zM284 292h1v2h-1zM285 288h1v6h-1zM286 288h1v5h-1zM287 290h1v3h-1zM288 290h1v2h-1zM289 287h1v4h-1zM290 287h1v2h-1zM291 288h1v2h-1zM292 288h1v2h-1zM293 288h1v3h-1zM294 290h1v2h-1zM295 288h1v3h-1zM296 287h1v2h-1zM297 287h1v3h-1zM298 289h1v3h-1zM299 291h1v2h-1zM300 289h1v3h-1zM301 289h1v2h-1zM302 289h1v2h-1zM303 290h1v2h-1zM304 290h1v3h-1zM305 287h1v6h-1zM306 287h1v2h-1zM307 287h1v3h-1zM308 289h1v2h-1zM309 288h1v2h-1zM310 288h1v2h-1zM311 287h1v2h-1zM312 285h1v3h-1zM313 285h1v3h-1zM314 286h1v2h-1zM315 286h1v3h-1zM316 288h1v2h-1zM317 286h1v3h-1zM318 286h1v4h-1zM319 285h1v5h-1zM320 285h1v6h-1zM321 285h1v6h-1zM322 285h1v6h-1zM323 290h1v2h-1zM324 289h1v2h-1zM325 286h1v4h-1zM326 285h1v2h-1zM327 285h1v3h-1zM328 287h1v4h-1zM329 289h1v2h-1zM330 286h1v4h-1zM331 286h1v7h-1zM332 287h1v6h-1zM333 287h1v3h-1zM334 289h1v3h-1zM335 289h1v3h-1zM336 289h1v2h-1zM337 290h1v3h-1zM338 291h1v2h-1zM339 291h1v2h-1zM340 289h1v4h-1zM341 289h1v2h-1zM342 289h1v2h-1zM343 286h1v4h-1zM344 286h1v3h-1zM345 287h1v2h-1zM346 287h1v2h-1zM347 287h1v2h-1zM348 288h1v4h-1zM349 291h1v2h-1zM350 290h1v2h-1zM351 288h1v3h-1zM352 286h1v3h-1zM353 286h1v3h-1zM354 287h1v2h-1zM355 287h1v2h-1zM356 286h1v2h-1zM357 286h1v4h-1zM358 286h1v4h-1zM359 286h1v2h-1zM360 284h1v3h-1zM361 284h1v3h-1zM362 274h1v13h-1zM363 274h1v16h-1zM364 282h1v8h-1zM365 282h1v5h-1zM366 282h1v5h-1zM367 282h1v6h-1zM368 286h1v2h-1zM369 282h1v5h-1zM370 282h1v6h-1zM371 283h1v5h-1zM372 282h1v2h-1zM373 282h1v5h-1zM374 286h1v2h-1zM375 284h1v4h-1zM376 284h1v2h-1zM377 280h1v5h-1zM378 280h1v15h-1zM379 283h1v12h-1zM380 283h1v2h-1zM381 283h1v7h-1zM382 282h1v8h-1zM383 282h1v6h-1zM384 287h1v3h-1zM385 285h1v5h-1zM386 283h1v3h-1zM387 283h1v8h-1zM388 286h1v5h-1zM389 277h1v10h-1zM390 277h1v10h-1zM391 283h1v4h-1zM392 283h1v4h-1zM393 282h1v5h-1zM394 282h1v2h-1zM395 282h1v2h-1zM396 281h1v2h-1zM397 281h1v2h-1zM398 280h1v3h-1zM399 279h1v2h-1zM400 279h1v4h-1zM401 282h1v6h-1zM402 278h1v10h-1zM403 278h1v11h-1zM404 285h1v4h-1zM405 282h1v4h-1zM406 282h1v3h-1zM407 284h1v4h-1zM408 283h1v5h-1zM409 279h1v5h-1zM410 279h1v6h-1zM411 280h1v5h-1zM412 280h1v3h-1zM413 282h1v3h-1zM414 279h1v6h-1zM415 279h1v13h-1zM416 280h1v12h-1zM417 280h1v5h-1zM418 283h1v2h-1zM419 277h1v7h-1zM420 267h1v11h-1zM421 267h1v13h-1zM422 279h1v2h-1zM423 266h1v15h-1zM424 266h1v13h-1zM425 278h1v3h-1zM426 280h1v2h-1zM427 277h1v5h-1zM428 277h1v14h-1zM429 277h1v14h-1zM430 277h1v2h-1zM431 277h1v5h-1zM432 278h1v4h-1zM433 278h1v5h-1zM434 282h1v2h-1zM435 275h1v9h-1zM436 272h1v4h-1zM437 272h1v2h-1zM438 273h1v3h-1zM439 273h1v3h-1zM440 273h1v2h-1zM441 274h1v13h-1zM442 281h1v6h-1zM443 275h1v7h-1zM444 274h1v2h-1zM445 274h1v8h-1zM446 277h1v5h-1zM447 272h1v6h-1zM448 272h1v3h-1zM449 274h1v6h-1zM450 279h1v2h-1zM451 279h1v2h-1zM452 274h1v7h-1zM453 272h1v3h-1zM454 267h1v6h-1zM455 267h1v9h-1zM456 275h1v5h-1zM457 271h1v9h-1zM458 271h1v5h-1zM459 274h1v2h-1zM460 274h1v4h-1zM461 272h1v6h-1zM462 272h1v2h-1zM463 273h1v3h-1zM464 271h1v5h-1zM465 271h1v2h-1zM466 264h1v9h-1zM467 264h1v5h-1zM468 268h1v10h-1zM469 273h1v5h-1zM470 270h1v4h-1zM471 270h1v2h-1zM472 269h1v3h-1zM473 266h1v4h-1zM474 266h1v10h-1zM475 271h1v5h-1zM476 262h1v10h-1zM477 262h1v14h-1zM478 262h1v14h-1zM479 262h1v8h-1zM480 269h1v7h-1zM481 274h1v2h-1zM482 270h1v5h-1zM483 270h1v2h-1zM484 270h1v2h-1zM485 263h1v9h-1zM486 263h1v11h-1zM487 269h1v5h-1zM488 269h1v4h-1zM489 269h1v4h-1zM490 259h1v11h-1zM491 259h1v5h-1zM492 263h1v10h-1zM493 264h1v9h-1zM494 264h1v7h-1zM495 264h1v7h-1zM496 264h1v5h-1zM497 260h1v9h-1zM498 260h1v8h-1zM499 267h1v2h-1zM500 268h1v4h-1zM501 271h1v2h-1zM502 271h1v2h-1zM503 267h1v5h-1zM504 267h1v2h-1zM505 267h1v5h-1zM506 270h1v2h-1zM507 268h1v3h-1zM508 264h1v5h-1zM509 264h1v3h-1zM510 263h1v4h-1zM511 263h1v6h-1zM512 258h1v11h-1zM513 258h1v11h-1zM514 264h1v5h-1zM515 264h1v8h-1zM516 262h1v10h-1z" fill="#ff00ff"/></svg><span style="position:absolute;top:65.842px;font-size:12px;line-height:14px;color:#000;white-space:pre;right:689px;transform-origin:100% 0;transform:scaleX(0.874);">500</span>
<span style="position:absolute;top:92.842px;font-size:12px;line-height:14px;color:#000;white-space:pre;right:689px;transform-origin:100% 0;transform:scaleX(0.874);">400</span>
<span style="position:absolute;top:118.842px;font-size:12px;line-height:14px;color:#000;white-space:pre;right:689px;transform-origin:100% 0;transform:scaleX(0.874);">300</span>
<span style="position:absolute;top:144.842px;font-size:12px;line-height:14px;color:#000;white-space:pre;right:689px;transform-origin:100% 0;transform:scaleX(0.874);">200</span>
<span style="position:absolute;top:170.842px;font-size:12px;line-height:14px;color:#000;white-space:pre;right:689px;transform-origin:100% 0;transform:scaleX(0.874);">100</span>
<span style="position:absolute;top:215.842px;font-size:12px;line-height:14px;color:#000;white-space:pre;right:689px;transform-origin:100% 0;transform:scaleX(0.874);">100</span>
<span style="position:absolute;top:242.842px;font-size:12px;line-height:14px;color:#000;white-space:pre;right:689px;transform-origin:100% 0;transform:scaleX(0.861);">80</span>
<span style="position:absolute;top:268.842px;font-size:12px;line-height:14px;color:#000;white-space:pre;right:689px;transform-origin:100% 0;transform:scaleX(0.861);">60</span>
<span style="position:absolute;top:294.842px;font-size:12px;line-height:14px;color:#000;white-space:pre;right:689px;transform-origin:100% 0;transform:scaleX(0.861);">40</span>
<span style="position:absolute;top:320.842px;font-size:12px;line-height:14px;color:#000;white-space:pre;right:689px;transform-origin:100% 0;transform:scaleX(0.861);">20</span>
<span style="position:absolute;top:180.842px;font-size:12px;line-height:14px;color:#000;white-space:pre;left:533px;transform-origin:0 0;transform:scaleX(0.748);">2</span>
<span style="position:absolute;top:164.842px;font-size:12px;line-height:14px;color:#000;white-space:pre;left:533px;transform-origin:0 0;transform:scaleX(0.748);">4</span>
<span style="position:absolute;top:147.842px;font-size:12px;line-height:14px;color:#000;white-space:pre;left:533px;transform-origin:0 0;transform:scaleX(0.748);">6</span>
<span style="position:absolute;top:131.842px;font-size:12px;line-height:14px;color:#000;white-space:pre;left:533px;transform-origin:0 0;transform:scaleX(0.748);">8</span>
<span style="position:absolute;top:115.842px;font-size:12px;line-height:14px;color:#000;white-space:pre;left:533px;transform-origin:0 0;transform:scaleX(0.823);">10</span>
<span style="position:absolute;top:98.842px;font-size:12px;line-height:14px;color:#000;white-space:pre;left:533px;transform-origin:0 0;transform:scaleX(0.823);">12</span>
<span style="position:absolute;top:82.842px;font-size:12px;line-height:14px;color:#000;white-space:pre;left:533px;transform-origin:0 0;transform:scaleX(0.823);">14</span>
<span style="position:absolute;top:65.842px;font-size:12px;line-height:14px;color:#000;white-space:pre;left:533px;transform-origin:0 0;transform:scaleX(0.823);">16</span>
<span style="position:absolute;top:320.842px;font-size:12px;line-height:14px;color:#000;white-space:pre;left:533px;transform-origin:0 0;transform:scaleX(0.748);">4</span>
<span style="position:absolute;top:294.842px;font-size:12px;line-height:14px;color:#000;white-space:pre;left:533px;transform-origin:0 0;transform:scaleX(0.748);">8</span>
<span style="position:absolute;top:268.842px;font-size:12px;line-height:14px;color:#000;white-space:pre;left:533px;transform-origin:0 0;transform:scaleX(0.823);">12</span>
<span style="position:absolute;top:242.842px;font-size:12px;line-height:14px;color:#000;white-space:pre;left:533px;transform-origin:0 0;transform:scaleX(0.823);">16</span>
<span style="position:absolute;top:215.842px;font-size:12px;line-height:14px;color:#000;white-space:pre;left:533px;transform-origin:0 0;transform:scaleX(0.823);">20</span>
<span style="position:absolute;top:205.842px;font-size:12px;line-height:14px;color:#000;white-space:pre;left:63.5px;transform-origin:50% 0;transform:translateX(-50%) scaleX(0.809);">0.0</span>
<span style="position:absolute;top:355.842px;font-size:12px;line-height:14px;color:#000;white-space:pre;left:63.5px;transform-origin:50% 0;transform:translateX(-50%) scaleX(0.809);">0.0</span>
<span style="position:absolute;top:205.842px;font-size:12px;line-height:14px;color:#000;white-space:pre;left:114.5px;transform-origin:50% 0;transform:translateX(-50%) scaleX(0.809);">0.5</span>
<span style="position:absolute;top:355.842px;font-size:12px;line-height:14px;color:#000;white-space:pre;left:114.5px;transform-origin:50% 0;transform:translateX(-50%) scaleX(0.809);">0.5</span>
<span style="position:absolute;top:205.842px;font-size:12px;line-height:14px;color:#000;white-space:pre;left:166.5px;transform-origin:50% 0;transform:translateX(-50%) scaleX(0.809);">1.0</span>
<span style="position:absolute;top:355.842px;font-size:12px;line-height:14px;color:#000;white-space:pre;left:166.5px;transform-origin:50% 0;transform:translateX(-50%) scaleX(0.809);">1.0</span>
<span style="position:absolute;top:205.842px;font-size:12px;line-height:14px;color:#000;white-space:pre;left:218.5px;transform-origin:50% 0;transform:translateX(-50%) scaleX(0.809);">1.5</span>
<span style="position:absolute;top:355.842px;font-size:12px;line-height:14px;color:#000;white-space:pre;left:218.5px;transform-origin:50% 0;transform:translateX(-50%) scaleX(0.809);">1.5</span>
<span style="position:absolute;top:205.842px;font-size:12px;line-height:14px;color:#000;white-space:pre;left:270.5px;transform-origin:50% 0;transform:translateX(-50%) scaleX(0.809);">2.0</span>
<span style="position:absolute;top:355.842px;font-size:12px;line-height:14px;color:#000;white-space:pre;left:270.5px;transform-origin:50% 0;transform:translateX(-50%) scaleX(0.809);">2.0</span>
<span style="position:absolute;top:205.842px;font-size:12px;line-height:14px;color:#000;white-space:pre;left:322.5px;transform-origin:50% 0;transform:translateX(-50%) scaleX(0.809);">2.5</span>
<span style="position:absolute;top:355.842px;font-size:12px;line-height:14px;color:#000;white-space:pre;left:322.5px;transform-origin:50% 0;transform:translateX(-50%) scaleX(0.809);">2.5</span>
<span style="position:absolute;top:205.842px;font-size:12px;line-height:14px;color:#000;white-space:pre;left:374.5px;transform-origin:50% 0;transform:translateX(-50%) scaleX(0.809);">3.0</span>
<span style="position:absolute;top:355.842px;font-size:12px;line-height:14px;color:#000;white-space:pre;left:374.5px;transform-origin:50% 0;transform:translateX(-50%) scaleX(0.809);">3.0</span>
<span style="position:absolute;top:205.842px;font-size:12px;line-height:14px;color:#000;white-space:pre;left:426.5px;transform-origin:50% 0;transform:translateX(-50%) scaleX(0.809);">3.5</span>
<span style="position:absolute;top:355.842px;font-size:12px;line-height:14px;color:#000;white-space:pre;left:426.5px;transform-origin:50% 0;transform:translateX(-50%) scaleX(0.809);">3.5</span>
<span style="position:absolute;top:205.842px;font-size:12px;line-height:14px;color:#000;white-space:pre;left:478.5px;transform-origin:50% 0;transform:translateX(-50%) scaleX(0.809);">4.0</span>
<span style="position:absolute;top:355.842px;font-size:12px;line-height:14px;color:#000;white-space:pre;left:478.5px;transform-origin:50% 0;transform:translateX(-50%) scaleX(0.809);">4.0</span>
<span style="position:absolute;top:205.842px;font-size:12px;line-height:14px;color:#000;white-space:pre;left:529.5px;transform-origin:50% 0;transform:translateX(-50%) scaleX(0.809);">4.5</span>
<span style="position:absolute;top:355.842px;font-size:12px;line-height:14px;color:#000;white-space:pre;left:529.5px;transform-origin:50% 0;transform:translateX(-50%) scaleX(0.809);">4.5</span>
<div style="position:absolute;left:562px;top:59px;width:68px;height:19px;border:1px solid #008080;border-radius:3px;background:linear-gradient(#fff 0,#fff 10px,#c0c0c0 10px,#c0c0c0 15px,#c0c0c0 15px);"></div><div style="position:absolute;left:564px;top:71px;width:64px;height:1px;background:repeating-linear-gradient(90deg,#fff 0,#fff 1px,#c0c0c0 1px,#c0c0c0 2px);"></div><div style="position:absolute;left:654px;top:59px;width:68px;height:19px;border:1px solid #008080;border-radius:3px;background:linear-gradient(#fff 0,#fff 10px,#c0c0c0 10px,#c0c0c0 15px,#808080 15px);"></div><div style="position:absolute;left:656px;top:71px;width:64px;height:1px;background:repeating-linear-gradient(90deg,#fff 0,#fff 1px,#c0c0c0 1px,#c0c0c0 2px);"></div><div style="position:absolute;left:656px;top:61px;width:64px;height:15px;border:1px dotted #800000;"></div><span style="position:absolute;top:60.495px;font-size:13px;line-height:15px;color:#000;white-space:pre;left:582.5px;transform-origin:0 0;transform:scaleX(0.962);">開始</span>
<span style="position:absolute;top:60.495px;font-size:13px;line-height:15px;color:#000;white-space:pre;left:667px;transform-origin:0 0;transform:scaleX(0.923);">終了(<u>X</u>)</span>
<div style="position:absolute;left:561px;top:93px;width:161px;height:73px;border:1px solid #c0c0c0;border-right:none;border-radius:3px 0 0 3px;"></div><div style="position:absolute;left:721px;top:93px;width:2px;height:1px;background:#fff;"></div><div style="position:absolute;left:721px;top:165px;width:2px;height:1px;background:#fff;"></div><div style="position:absolute;left:721px;top:94px;width:1px;height:1px;background:#c0c0c0;"></div><div style="position:absolute;left:721px;top:164px;width:1px;height:1px;background:#c0c0c0;"></div><div style="position:absolute;left:722px;top:95px;width:1px;height:1px;background:#c0c0c0;"></div><div style="position:absolute;left:722px;top:163px;width:1px;height:1px;background:#c0c0c0;"></div><div style="position:absolute;left:567px;top:92px;width:63px;height:3px;background:#fff;"></div><span style="position:absolute;top:83.995px;font-size:13px;line-height:15px;color:#008080;white-space:pre;left:569px;transform-origin:0 0;transform:scaleX(0.756);">ディスク情報</span>
<span style="position:absolute;top:98.995px;font-size:13px;line-height:15px;color:#000;white-space:pre;left:568px;transform-origin:0 0;transform:scaleX(0.669);">タイプ:</span>
<span style="position:absolute;top:99.842px;font-size:12px;line-height:14px;color:#000080;white-space:pre;left:617px;transform-origin:0 0;transform:scaleX(1.026);">DVD-R</span>
<span style="position:absolute;top:114.842px;font-size:12px;line-height:14px;color:#000;white-space:pre;left:569px;transform-origin:0 0;transform:scaleX(0.782);">ID:</span>
<span style="position:absolute;top:114.842px;font-size:12px;line-height:14px;color:#000080;white-space:pre;left:617px;transform-origin:0 0;transform:scaleX(0.894);">OPTODISCR004</span>
<span style="position:absolute;top:129.495px;font-size:13px;line-height:15px;color:#000;white-space:pre;left:568px;transform-origin:0 0;transform:scaleX(0.911);">日付:</span>
<span style="position:absolute;top:130.342px;font-size:12px;line-height:14px;color:#000080;white-space:pre;left:617px;transform-origin:0 0;transform:scaleX(0.924);">19 March 2005</span>
<span style="position:absolute;top:145.342px;font-size:12px;line-height:14px;color:#000;white-space:pre;left:569px;transform-origin:0 0;transform:scaleX(0.871);">Label:</span>
<span style="position:absolute;top:145.342px;font-size:12px;line-height:14px;color:#000080;white-space:pre;left:617px;transform-origin:0 0;transform:scaleX(0.857);">CDS_TEST_B2</span>
<div style="position:absolute;left:561px;top:173px;width:161px;height:167px;border:1px solid #c0c0c0;border-right:none;border-radius:3px 0 0 3px;"></div><div style="position:absolute;left:721px;top:173px;width:2px;height:1px;background:#fff;"></div><div style="position:absolute;left:721px;top:339px;width:2px;height:1px;background:#fff;"></div><div style="position:absolute;left:721px;top:174px;width:1px;height:1px;background:#c0c0c0;"></div><div style="position:absolute;left:721px;top:338px;width:1px;height:1px;background:#c0c0c0;"></div><div style="position:absolute;left:722px;top:175px;width:1px;height:1px;background:#c0c0c0;"></div><div style="position:absolute;left:722px;top:337px;width:1px;height:1px;background:#c0c0c0;"></div><div style="position:absolute;left:567px;top:172px;width:47px;height:3px;background:#fff;"></div><span style="position:absolute;top:165.842px;font-size:12px;line-height:14px;color:#008080;white-space:pre;left:570px;transform-origin:0 0;transform:scaleX(0.957);">Settings</span>
<span style="position:absolute;top:185.995px;font-size:13px;line-height:15px;color:#000;white-space:pre;left:567.7px;transform-origin:0 0;transform:scaleX(0.946);">転送速度</span>
<div style="position:absolute;left:631px;top:185px;width:82px;height:20px;border:1px solid #808080;background:#fff;"></div><div style="position:absolute;left:695px;top:186px;width:17px;height:18px;border:1px solid #808080;border-radius:2px;background:linear-gradient(#fff 0,#fff 8px,#c0c0c0 8px);"></div><svg width="743" height="449"><path d="M700.5 192.5l3 3.5l3.5-3.5" stroke="#800000" stroke-width="2" fill="none"/></svg><span style="position:absolute;top:186.995px;font-size:13px;line-height:15px;color:#000;white-space:pre;left:633.7px;transform-origin:0 0;transform:scaleX(0.965);">最大</span>
<span style="position:absolute;top:211.995px;font-size:13px;line-height:15px;color:#000;white-space:pre;left:567.7px;transform-origin:0 0;transform:scaleX(0.962);">開始</span>
<span style="position:absolute;top:233.995px;font-size:13px;line-height:15px;color:#000;white-space:pre;left:567.7px;transform-origin:0 0;transform:scaleX(0.946);">終了位置</span>
<div style="position:absolute;left:631px;top:209px;width:70px;height:18px;background:repeating-linear-gradient(90deg,#808080 0,#808080 1px,#fff 1px,#fff 2px);"></div><div style="position:absolute;left:631px;top:210px;width:70px;height:16px;background:repeating-linear-gradient(180deg,#fff 0,#fff 1px,#808080 1px,#808080 2px);"></div><div style="position:absolute;left:632px;top:210px;width:68px;height:16px;background:#fff;"></div><span style="position:absolute;top:210.842px;font-size:12px;line-height:14px;color:#000;white-space:pre;left:634px;transform-origin:0 0;transform:scaleX(0.916);">0000 MB</span>
<div style="position:absolute;left:631px;top:232px;width:70px;height:18px;background:repeating-linear-gradient(90deg,#808080 0,#808080 1px,#fff 1px,#fff 2px);"></div><div style="position:absolute;left:631px;top:233px;width:70px;height:16px;background:repeating-linear-gradient(180deg,#fff 0,#fff 1px,#808080 1px,#808080 2px);"></div><div style="position:absolute;left:632px;top:233px;width:68px;height:16px;background:#fff;"></div><span style="position:absolute;top:233.842px;font-size:12px;line-height:14px;color:#000;white-space:pre;left:634px;transform-origin:0 0;transform:scaleX(0.916);">4489 MB</span>
<div style="position:absolute;left:569px;top:255px;width:13px;height:13px;border:1px solid #008080;background:#fff;"></div><svg width="743" height="449"><path d="M572 260.5l2.5 3l5-5.5" stroke="#00d000" stroke-width="2" fill="none"/></svg><span style="position:absolute;top:254.842px;font-size:12px;line-height:14px;color:#000;white-space:pre;left:584.5px;transform-origin:0 0;transform:scaleX(0.932);">Show C1/PIE</span>
<div style="position:absolute;left:569px;top:272px;width:13px;height:13px;border:1px solid #008080;background:#fff;"></div><svg width="743" height="449"><path d="M572 277.5l2.5 3l5-5.5" stroke="#00d000" stroke-width="2" fill="none"/></svg><span style="position:absolute;top:271.842px;font-size:12px;line-height:14px;color:#000;white-space:pre;left:584.5px;transform-origin:0 0;transform:scaleX(0.941);">Show C2/PIF</span>
<div style="position:absolute;left:569px;top:288px;width:13px;height:13px;border:1px solid #008080;background:#fff;"></div><svg width="743" height="449"><path d="M572 293.5l2.5 3l5-5.5" stroke="#00d000" stroke-width="2" fill="none"/></svg><span style="position:absolute;top:287.842px;font-size:12px;line-height:14px;color:#000;white-space:pre;left:584.5px;transform-origin:0 0;transform:scaleX(0.977);">Show Jitter</span>
<div style="position:absolute;left:569px;top:305px;width:13px;height:13px;border:1px solid #008080;background:#fff;"></div><svg width="743" height="449"><path d="M572 310.5l2.5 3l5-5.5" stroke="#00d000" stroke-width="2" fill="none"/></svg><span style="position:absolute;top:304.842px;font-size:12px;line-height:14px;color:#000;white-space:pre;left:584.5px;transform-origin:0 0;transform:scaleX(0.909);">Show Read Speed</span>
<div style="position:absolute;left:569px;top:321px;width:13px;height:13px;border:1px solid #008080;background:#fff;"></div><svg width="743" height="449"><path d="M572 326.5l2.5 3l5-5.5" stroke="#00d000" stroke-width="2" fill="none"/></svg><span style="position:absolute;top:320.842px;font-size:12px;line-height:14px;color:#000;white-space:pre;left:584.5px;transform-origin:0 0;transform:scaleX(0.923);">Show Write Speed</span>
<div style="position:absolute;left:561px;top:344px;width:161px;height:24px;border:1px solid #c0c0c0;border-right:none;border-radius:3px 0 0 3px;"></div><div style="position:absolute;left:721px;top:344px;width:2px;height:1px;background:#fff;"></div><div style="position:absolute;left:721px;top:367px;width:2px;height:1px;background:#fff;"></div><div style="position:absolute;left:721px;top:345px;width:1px;height:1px;background:#c0c0c0;"></div><div style="position:absolute;left:721px;top:366px;width:1px;height:1px;background:#c0c0c0;"></div><div style="position:absolute;left:722px;top:346px;width:1px;height:1px;background:#c0c0c0;"></div><div style="position:absolute;left:722px;top:365px;width:1px;height:1px;background:#c0c0c0;"></div><span style="position:absolute;top:347.995px;font-size:13px;line-height:15px;color:#000;white-space:pre;left:567.7px;transform-origin:0 0;transform:scaleX(0.772);">品質スコア:</span>
<span style="position:absolute;top:348.842px;font-size:12px;line-height:14px;color:#000080;white-space:pre;right:36.7px;transform-origin:100% 0;transform:scaleX(0.822);">0</span>
<div style="position:absolute;left:561px;top:374px;width:161px;height:63px;border:1px solid #c0c0c0;border-right:none;border-radius:3px 0 0 3px;"></div><div style="position:absolute;left:721px;top:374px;width:2px;height:1px;background:#fff;"></div><div style="position:absolute;left:721px;top:436px;width:2px;height:1px;background:#fff;"></div><div style="position:absolute;left:721px;top:375px;width:1px;height:1px;background:#c0c0c0;"></div><div style="position:absolute;left:721px;top:435px;width:1px;height:1px;background:#c0c0c0;"></div><div style="position:absolute;left:722px;top:376px;width:1px;height:1px;background:#c0c0c0;"></div><div style="position:absolute;left:722px;top:434px;width:1px;height:1px;background:#c0c0c0;"></div><span style="position:absolute;top:379.995px;font-size:13px;line-height:15px;color:#000;white-space:pre;left:567.7px;transform-origin:0 0;transform:scaleX(0.917);">進行状況:</span>
<span style="position:absolute;top:380.842px;font-size:12px;line-height:14px;color:#000080;white-space:pre;right:35.3px;transform-origin:100% 0;transform:scaleX(0.867);">100 %</span>
<span style="position:absolute;top:398.995px;font-size:13px;line-height:15px;color:#000;white-space:pre;left:567.7px;transform-origin:0 0;transform:scaleX(0.692);">ポジション:</span>
<span style="position:absolute;top:399.842px;font-size:12px;line-height:14px;color:#000080;white-space:pre;right:37px;transform-origin:100% 0;transform:scaleX(0.916);">4488 MB</span>
<span style="position:absolute;top:416.995px;font-size:13px;line-height:15px;color:#000;white-space:pre;left:567.7px;transform-origin:0 0;transform:scaleX(0.895);">速度:</span>
<span style="position:absolute;top:417.842px;font-size:12px;line-height:14px;color:#000080;white-space:pre;right:35.5px;transform-origin:100% 0;transform:scaleX(0.922);">8.33 X</span>
<div style="position:absolute;left:18px;top:374px;width:170px;height:63px;border:1px solid #808080;"></div><div style="position:absolute;left:28px;top:373px;width:61px;height:3px;background:#fff;"></div><div style="position:absolute;left:28px;top:371px;width:8px;height:8px;border:1px solid #000;background:#00ffff;"></div><span style="position:absolute;top:366.842px;font-size:12px;line-height:14px;color:#000;white-space:pre;left:40.5px;transform-origin:0 0;transform:scaleX(0.919);">PI Errors</span>
<div style="position:absolute;left:198px;top:374px;width:170px;height:63px;border:1px solid #808080;"></div><div style="position:absolute;left:208px;top:373px;width:72px;height:3px;background:#fff;"></div><div style="position:absolute;left:208px;top:371px;width:8px;height:8px;border:1px solid #000;background:#ffff00;"></div><span style="position:absolute;top:366.842px;font-size:12px;line-height:14px;color:#000;white-space:pre;left:220.5px;transform-origin:0 0;transform:scaleX(0.933);">PI Failures</span>
<div style="position:absolute;left:379px;top:374px;width:169px;height:47px;border:1px solid #808080;"></div><div style="position:absolute;left:389px;top:373px;width:38px;height:3px;background:#fff;"></div><div style="position:absolute;left:389px;top:371px;width:8px;height:8px;border:1px solid #000;background:#ff00ff;"></div><span style="position:absolute;top:366.842px;font-size:12px;line-height:14px;color:#000;white-space:pre;left:401.5px;transform-origin:0 0;transform:scaleX(0.98);">Jitter</span>
<span style="position:absolute;top:380.995px;font-size:13px;line-height:15px;color:#000;white-space:pre;left:26px;transform-origin:0 0;transform:scaleX(0.911);">平均:</span>
<span style="position:absolute;top:381.842px;font-size:12px;line-height:14px;color:#000080;white-space:pre;right:568px;transform-origin:100% 0;transform:scaleX(0.832);">16.21</span>
<span style="position:absolute;top:380.995px;font-size:13px;line-height:15px;color:#000;white-space:pre;left:207px;transform-origin:0 0;transform:scaleX(0.911);">平均:</span>
<span style="position:absolute;top:381.842px;font-size:12px;line-height:14px;color:#000080;white-space:pre;right:385.5px;transform-origin:100% 0;transform:scaleX(0.878);">0.33</span>
<span style="position:absolute;top:380.995px;font-size:13px;line-height:15px;color:#000;white-space:pre;left:388.5px;transform-origin:0 0;transform:scaleX(0.911);">平均:</span>
<span style="position:absolute;top:381.842px;font-size:12px;line-height:14px;color:#000080;white-space:pre;right:205px;transform-origin:100% 0;transform:scaleX(0.83);">9.86 %</span>
<span style="position:absolute;top:399.495px;font-size:13px;line-height:15px;color:#000;white-space:pre;left:26px;transform-origin:0 0;transform:scaleX(0.911);">最大:</span>
<span style="position:absolute;top:400.342px;font-size:12px;line-height:14px;color:#000080;white-space:pre;right:568px;transform-origin:100% 0;transform:scaleX(0.874);">426</span>
<span style="position:absolute;top:399.495px;font-size:13px;line-height:15px;color:#000;white-space:pre;left:207px;transform-origin:0 0;transform:scaleX(0.911);">最大:</span>
<span style="position:absolute;top:400.342px;font-size:12px;line-height:14px;color:#000080;white-space:pre;right:385.5px;transform-origin:100% 0;transform:scaleX(0.898);">95</span>
<span style="position:absolute;top:399.495px;font-size:13px;line-height:15px;color:#000;white-space:pre;left:388.5px;transform-origin:0 0;transform:scaleX(0.911);">最大:</span>
<span style="position:absolute;top:400.342px;font-size:12px;line-height:14px;color:#000080;white-space:pre;right:205px;transform-origin:100% 0;transform:scaleX(0.83);">14.4 %</span>
<span style="position:absolute;top:417.495px;font-size:13px;line-height:15px;color:#000;white-space:pre;left:26px;transform-origin:0 0;transform:scaleX(0.918);">合計 :</span>
<span style="position:absolute;top:418.342px;font-size:12px;line-height:14px;color:#000080;white-space:pre;right:568px;transform-origin:100% 0;transform:scaleX(0.886);">222436</span>
<span style="position:absolute;top:417.495px;font-size:13px;line-height:15px;color:#000;white-space:pre;left:207px;transform-origin:0 0;transform:scaleX(0.918);">合計 :</span>
<span style="position:absolute;top:418.342px;font-size:12px;line-height:14px;color:#000080;white-space:pre;right:385.5px;transform-origin:100% 0;transform:scaleX(0.899);">3405</span>
<span style="position:absolute;top:421.842px;font-size:12px;line-height:14px;color:#000;white-space:pre;left:389.5px;transform-origin:0 0;transform:scaleX(0.915);">PO Failures:</span>
<span style="position:absolute;top:421.842px;font-size:12px;line-height:14px;color:#000080;white-space:pre;right:205.5px;transform-origin:100% 0;transform:scaleX(0.822);">9</span>
<svg width="743" height="449" viewBox="0 0 743 449" shape-rendering="crispEdges"><rect x="611" y="5" width="21" height="21" fill="#fff" rx="3"/><rect x="634" y="5" width="21" height="21" fill="#fff" rx="3"/><rect x="612" y="6" width="19" height="19" fill="#00ff00" rx="2"/><rect x="629" y="9" width="1" height="14" fill="#008000" /><rect x="614" y="23" width="15" height="1" fill="#008000" /><rect x="615" y="10" width="7" height="10" fill="#e0e0e0" /><rect x="615" y="9" width="7" height="1" fill="#800000" /><rect x="615" y="10" width="1" height="10" fill="#800000" /><rect x="615" y="19" width="5" height="1" fill="#800000" /><rect x="616" y="12" width="5" height="1" fill="#a0a0a0" /><rect x="616" y="14" width="5" height="1" fill="#a0a0a0" /><rect x="616" y="16" width="5" height="1" fill="#a0a0a0" /><rect x="621" y="12" width="7" height="10" fill="#e8e8e8" /><rect x="620" y="11" width="6" height="1" fill="#800000" /><rect x="620" y="11" width="1" height="11" fill="#800000" /><rect x="627" y="13" width="1" height="9" fill="#000" /><rect x="621" y="21" width="7" height="1" fill="#000" /><rect x="622" y="14" width="5" height="1" fill="#a0a0a0" /><rect x="622" y="16" width="5" height="1" fill="#a0a0a0" /><rect x="622" y="18" width="5" height="1" fill="#a0a0a0" /><rect x="635" y="6" width="19" height="19" fill="#008000" rx="2"/><rect x="635.5" y="6.5" width="18" height="18" rx="2" fill="none" stroke="#00ff00" stroke-dasharray="1 1"/><rect x="639" y="9" width="11" height="12" fill="#a0a0a0" /><rect x="638" y="9" width="1" height="12" fill="#800000" /><rect x="650" y="9" width="1" height="12" fill="#800000" /><rect x="639" y="20" width="11" height="1" fill="#800000" /><rect x="639" y="8" width="11" height="1" fill="#800000" /><rect x="641" y="10" width="7" height="4" fill="#c0c0c0" /><rect x="641" y="16" width="7" height="4" fill="#808080" /><rect x="639" y="14" width="11" height="1" fill="#800000" /><rect x="671" y="5" width="21" height="21" fill="#808080" rx="2"/><rect x="672" y="6" width="19" height="17" fill="#c0c0c0" /><rect x="672" y="6" width="19" height="4" fill="#fff" /><rect x="675" y="18" width="8" height="3" fill="#808080" /><rect x="675" y="18" width="8" height="1" fill="#0000c0" /><rect x="682" y="18" width="1" height="2" fill="#800000" /><rect x="694" y="6" width="21" height="20" fill="#c0c0c0" rx="2"/><rect x="695" y="6" width="19" height="11" fill="#fff" /><rect x="699" y="10" width="11" height="10" fill="#808080" /><rect x="700" y="12" width="9" height="7" fill="#fff" /><rect x="700" y="17" width="9" height="2" fill="#c0c0c0" /><rect x="717" y="5" width="22" height="21" fill="#808080" rx="3"/><rect x="717.5" y="5.5" width="21" height="20" rx="3" fill="none" stroke="#800000" stroke-dasharray="1 1"/><path d="M722 9.5L733 20M733 9.5L722 20" stroke="#fff" stroke-width="2.2" fill="none" shape-rendering="auto"/></svg>
</body></html>
